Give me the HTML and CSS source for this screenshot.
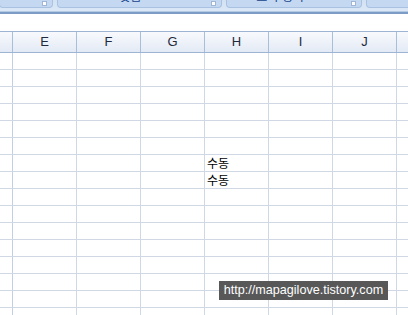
FILE: index.html
```html
<!DOCTYPE html>
<html lang="ko">
<head>
	<meta charset="UTF-8">
	<title>Sheet</title>
	<link rel="stylesheet" href="styles.css">
</head>
<body>
	<div id="ribbon">
		<div class="group g1"><i></i></div>
		<div class="group g2"><span>맞춤</span><i></i></div>
		<div class="group g3"><span>표시 형식</span><i></i></div>
		<div class="group g4"></div>
	</div>
	<div id="formula"></div>
	<table id="sheet">
		<tr class="head"><th class="rh"></th><th>E</th><th>F</th><th>G</th><th>H</th><th>I</th><th>J</th><th class="last"></th></tr>
		<tr><td class="rh"></td><td></td><td></td><td></td><td></td><td></td><td></td><td></td></tr>
		<tr><td class="rh"></td><td></td><td></td><td></td><td></td><td></td><td></td><td></td></tr>
		<tr><td class="rh"></td><td></td><td></td><td></td><td></td><td></td><td></td><td></td></tr>
		<tr><td class="rh"></td><td></td><td></td><td></td><td></td><td></td><td></td><td></td></tr>
		<tr><td class="rh"></td><td></td><td></td><td></td><td></td><td></td><td></td><td></td></tr>
		<tr><td class="rh"></td><td></td><td></td><td></td><td></td><td></td><td></td><td></td></tr>
		<tr><td class="rh"></td><td></td><td></td><td></td><td>수동</td><td></td><td></td><td></td></tr>
		<tr><td class="rh"></td><td></td><td></td><td></td><td>수동</td><td></td><td></td><td></td></tr>
		<tr><td class="rh"></td><td></td><td></td><td></td><td></td><td></td><td></td><td></td></tr>
		<tr><td class="rh"></td><td></td><td></td><td></td><td></td><td></td><td></td><td></td></tr>
		<tr><td class="rh"></td><td></td><td></td><td></td><td></td><td></td><td></td><td></td></tr>
		<tr><td class="rh"></td><td></td><td></td><td></td><td></td><td></td><td></td><td></td></tr>
		<tr><td class="rh"></td><td></td><td></td><td></td><td></td><td></td><td></td><td></td></tr>
		<tr><td class="rh"></td><td></td><td></td><td></td><td></td><td></td><td></td><td></td></tr>
		<tr><td class="rh"></td><td></td><td></td><td></td><td></td><td></td><td></td><td></td></tr>
		<tr><td class="rh"></td><td></td><td></td><td></td><td></td><td></td><td></td><td></td></tr>
	</table>
	<div id="mark">http://mapagilove.tistory.com</div>
</body>
</html>
```

FILE: styles.css
```css
html,body {
	margin: 0;
	padding: 0;
	background: #fff;
}
body {
	position: relative;
	width: 408px;
	height: 315px;
	overflow: hidden;
	font-family: "Liberation Sans", "Noto Sans CJK KR", sans-serif;
}
#ribbon {
	display: flex;
	gap: 4px;
	height: 12px;
	overflow: hidden;
	background: linear-gradient(#d2e1f3, #dce8f6);
	border-bottom: 2px solid #7c9cc5;
	box-shadow: inset 0 -3px 0 -2px #b4c9e4;
}
#ribbon .group {
	position: relative;
	flex: none;
	height: 8px;
	overflow: hidden;
	box-sizing: border-box;
	border: 1px solid #a9c2e2;
	border-top: 0;
	border-radius: 0 0 4px 4px;
	background: #c4d8f1;
	text-align: center;
	font-size: 12px;
	color: #15428b;
}
#ribbon .group span {
	display: block;
	margin-top: -10px;
	line-height: 14px;
}
#ribbon .group i {
	position: absolute;
	right: 5px;
	bottom: 1px;
	width: 3px;
	height: 3px;
	background: #fff;
	border: 1px solid #9fb7d6;
}
.g1 { width: 54px; margin-left: -1px; }
.g2 { width: 165px; padding-right: 18px; }
.g3 { width: 136px; padding-right: 28px; }
.g4 { width: 50px; }
#formula {
	height: 17px;
	border-bottom: 1px solid #9db5d2;
}
#sheet {
	border-collapse: collapse;
	table-layout: fixed;
	width: 460px;
}
#sheet td, #sheet th {
	padding: 0;
	width: 63px;
	height: 16px;
	border-right: 1px solid #d0d7e5;
	border-bottom: 1px solid #d0d7e5;
	font-size: 12px;
	font-weight: normal;
	line-height: 16px;
	white-space: nowrap;
	overflow: hidden;
}
#sheet td {
	padding-left: 2px;
	font-family: "Noto Sans CJK KR", sans-serif;
	font-size: 12px;
	color: #000;
}
#sheet .rh {
	width: 12px;
	padding: 0;
	border-right-color: #c3cfe6;
}
#sheet .last { width: 63px; }
.head th {
	height: 20px !important;
	background: linear-gradient(#f7f9fc, #e3eaf5);
	border-right-color: #a8bedb !important;
	border-bottom-color: #9db5d2 !important;
	font-size: 13px !important;
	line-height: 20px !important;
	color: #1f2a3d;
	text-align: center;
}
#mark {
	position: absolute;
	left: 219px;
	top: 281px;
	width: 169px;
	height: 19px;
	background: #585858;
	color: #fff;
	font-size: 12.6px;
	line-height: 19px;
	text-align: center;
}
```
